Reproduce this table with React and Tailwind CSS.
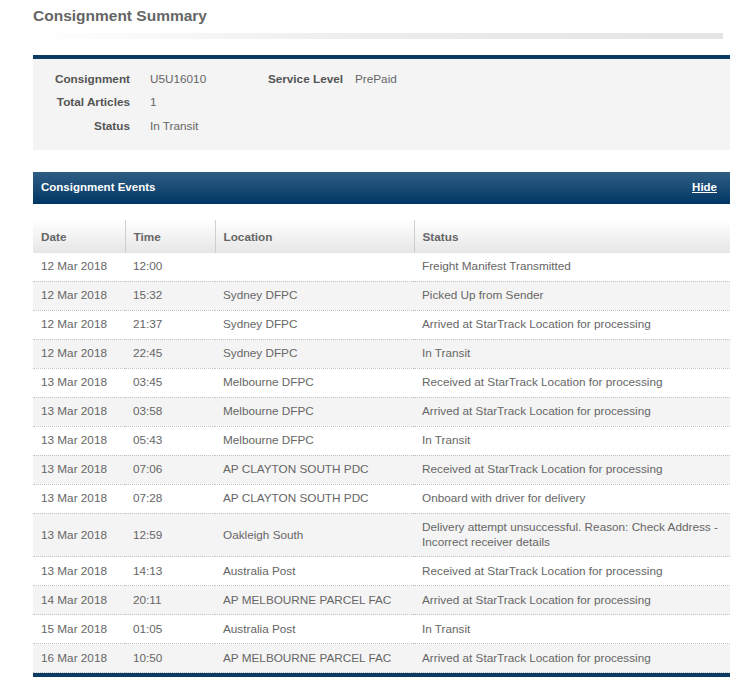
import React from "react";

const events = [
  ["12 Mar 2018", "12:00", "", "Freight Manifest Transmitted"],
  ["12 Mar 2018", "15:32", "Sydney DFPC", "Picked Up from Sender"],
  ["12 Mar 2018", "21:37", "Sydney DFPC", "Arrived at StarTrack Location for processing"],
  ["12 Mar 2018", "22:45", "Sydney DFPC", "In Transit"],
  ["13 Mar 2018", "03:45", "Melbourne DFPC", "Received at StarTrack Location for processing"],
  ["13 Mar 2018", "03:58", "Melbourne DFPC", "Arrived at StarTrack Location for processing"],
  ["13 Mar 2018", "05:43", "Melbourne DFPC", "In Transit"],
  ["13 Mar 2018", "07:06", "AP CLAYTON SOUTH PDC", "Received at StarTrack Location for processing"],
  ["13 Mar 2018", "07:28", "AP CLAYTON SOUTH PDC", "Onboard with driver for delivery"],
  [
    "13 Mar 2018",
    "12:59",
    "Oakleigh South",
    "Delivery attempt unsuccessful. Reason: Check Address - Incorrect receiver details",
  ],
  ["13 Mar 2018", "14:13", "Australia Post", "Received at StarTrack Location for processing"],
  ["14 Mar 2018", "20:11", "AP MELBOURNE PARCEL FAC", "Arrived at StarTrack Location for processing"],
  ["15 Mar 2018", "01:05", "Australia Post", "In Transit"],
  ["16 Mar 2018", "10:50", "AP MELBOURNE PARCEL FAC", "Arrived at StarTrack Location for processing"],
];

const SummaryRow = ({ label, value, label2, value2 }) => (
  <div className="flex items-center h-[23.5px]">
    <div className="w-[97px] text-right font-bold text-[#555]">{label}</div>
    <div className="w-[133px] pl-[20px] text-[#666]">{value}</div>
    {label2 && <div className="w-[80px] text-right font-bold text-[#555]">{label2}</div>}
    {value2 && <div className="pl-[12px] text-[#666]">{value2}</div>}
  </div>
);

const App = () => {
  return (
    <div
      className="bg-white w-[750px] min-h-[683px] pl-[33px] pr-[20px] pt-[7px] text-[11.75px] text-[#666]"
      style={{ fontFamily: '"Liberation Sans", Arial, sans-serif' }}
    >
      <h1 className="text-[15.5px] font-bold text-[#666] leading-[18px]">Consignment Summary</h1>
      <div className="mt-[8px] h-[6px] w-[690px] bg-gradient-to-r from-white via-[#ececec] to-[#e4e4e4]" />

      <div className="mt-[16px] border-t-[4px] border-[#0b3a62] bg-[#f4f4f4] pt-[8px] pb-[12px]">
        <SummaryRow label="Consignment" value="U5U16010" label2="Service Level" value2="PrePaid" />
        <SummaryRow label="Total Articles" value="1" />
        <SummaryRow label="Status" value="In Transit" />
      </div>

      <div className="mt-[22px] h-[32px] flex items-center justify-between px-[8px] bg-gradient-to-b from-[#2e5e85] to-[#003764] text-white font-bold text-[11.5px]">
        <span>Consignment Events</span>
        <span className="underline mr-[5px]">Hide</span>
      </div>

      <table className="mt-[16px] w-full border-collapse">
        <thead>
          <tr className="h-[33px] bg-gradient-to-b from-white to-[#e6e6e6] text-left font-bold text-[#666]">
            <th className="w-[92px] pl-[8px] pt-[2px]">Date</th>
            <th className="w-[90px] pl-[8px] pt-[2px] border-l border-[#cfcfcf]">Time</th>
            <th className="w-[199px] pl-[8px] pt-[2px] border-l border-[#cfcfcf]">Location</th>
            <th className="pl-[8px] pt-[2px] border-l border-[#cfcfcf]">Status</th>
          </tr>
        </thead>
        <tbody>
          {events.map((row, i) => (
            <tr
              key={i}
              className={`border-b border-dotted border-[#c4c4c4] ${i % 2 === 1 ? "bg-[#f4f4f4]" : "bg-white"}`}
            >
              {row.map((cell, j) => (
                <td key={j} className={`pl-[8px] ${j === 3 ? "pr-[2px]" : ""} py-[6.75px] leading-[14.5px] align-middle`}>
                  {cell}
                </td>
              ))}
            </tr>
          ))}
        </tbody>
      </table>
      <div className="h-[4px] bg-[#0b3a62]" />
    </div>
  );
};

export default App;
